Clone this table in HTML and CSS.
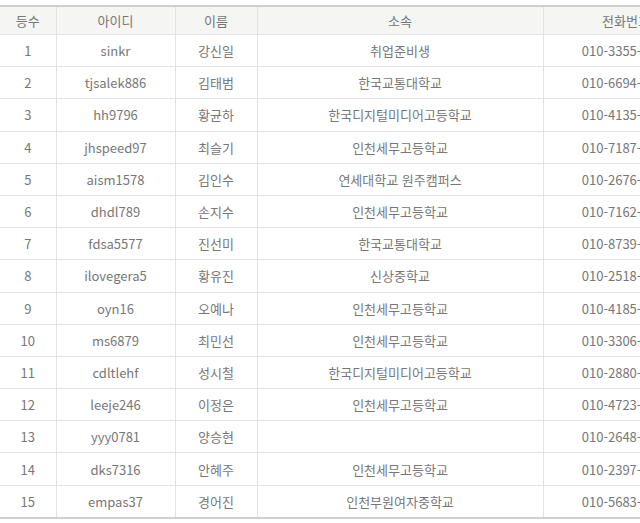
FILE: index.html
```html
<!DOCTYPE html>
<html lang="ko">
<head>
<meta charset="utf-8">
<link rel="stylesheet" href="styles.css">
</head>
<body>
<div class="wrap">
<table class="list">
<colgroup>
<col class="c-rank"><col class="c-id"><col class="c-name"><col class="c-org"><col class="c-tel"><col class="c-etc">
</colgroup>
<thead>
<tr><th>등수</th><th>아이디</th><th>이름</th><th>소속</th><th>전화번호</th><th>비고</th></tr>
</thead>
<tbody>
<tr><td>1</td><td>sinkr</td><td>강신일</td><td>취업준비생</td><td>010-3355-1234</td><td></td></tr>
<tr><td>2</td><td>tjsalek886</td><td>김태범</td><td>한국교통대학교</td><td>010-6694-2231</td><td></td></tr>
<tr><td>3</td><td>hh9796</td><td>황균하</td><td>한국디지털미디어고등학교</td><td>010-4135-7782</td><td></td></tr>
<tr><td>4</td><td>jhspeed97</td><td>최슬기</td><td>인천세무고등학교</td><td>010-7187-3345</td><td></td></tr>
<tr><td>5</td><td>aism1578</td><td>김인수</td><td>연세대학교 원주캠퍼스</td><td>010-2676-9012</td><td></td></tr>
<tr><td>6</td><td>dhdl789</td><td>손지수</td><td>인천세무고등학교</td><td>010-7162-4456</td><td></td></tr>
<tr><td>7</td><td>fdsa5577</td><td>진선미</td><td>한국교통대학교</td><td>010-8739-1120</td><td></td></tr>
<tr><td>8</td><td>ilovegera5</td><td>황유진</td><td>신상중학교</td><td>010-2518-6673</td><td></td></tr>
<tr><td>9</td><td>oyn16</td><td>오예나</td><td>인천세무고등학교</td><td>010-4185-2290</td><td></td></tr>
<tr><td>10</td><td>ms6879</td><td>최민선</td><td>인천세무고등학교</td><td>010-3306-5581</td><td></td></tr>
<tr><td>11</td><td>cdltlehf</td><td>성시철</td><td>한국디지털미디어고등학교</td><td>010-2880-7764</td><td></td></tr>
<tr><td>12</td><td>leeje246</td><td>이정은</td><td>인천세무고등학교</td><td>010-4723-1198</td><td></td></tr>
<tr><td>13</td><td>yyy0781</td><td>양승현</td><td></td><td>010-2648-3307</td><td></td></tr>
<tr><td>14</td><td>dks7316</td><td>안혜주</td><td>인천세무고등학교</td><td>010-2397-8842</td><td></td></tr>
<tr><td>15</td><td>empas37</td><td>경어진</td><td>인천부원여자중학교</td><td>010-5683-2019</td><td></td></tr>
</tbody>
</table>
</div>
</body>
</html>
```
FILE: styles.css
```css
html, body {
  margin: 0;
  padding: 0;
  background: #fff;
  overflow: hidden;
}
.wrap {
  padding-top: 5px;
  width: 900px;
}
.list {
  border-collapse: collapse;
  table-layout: fixed;
  width: 820px;
  font-family: "Noto Sans CJK KR", "Noto Sans", sans-serif;
  font-size: 13px;
  color: #777;
  border-top: 2px solid #cfcfcf;
  border-bottom: 2px solid #cfcfcf;
}
.c-rank { width: 56px; }
.c-id { width: 119px; }
.c-name { width: 82px; }
.c-org { width: 286px; }
.c-tel { width: 166px; }
.c-etc { width: 111px; }
.list th {
  background: #f5f5f3;
  font-weight: normal;
  color: #777;
  height: 27px;
  padding: 0;
  line-height: 19px;
  border-right: 1px solid #e3e3e3;
  border-bottom: 1px solid #e3e3e3;
  text-align: center;
}
.list td {
  height: 31.2px;
  padding: 0;
  line-height: 19px;
  text-align: center;
  border-right: 1px solid #e3e3e3;
  border-bottom: 1px solid #e3e3e3;
}
.list tr > :first-child { border-left: 0; }
```
